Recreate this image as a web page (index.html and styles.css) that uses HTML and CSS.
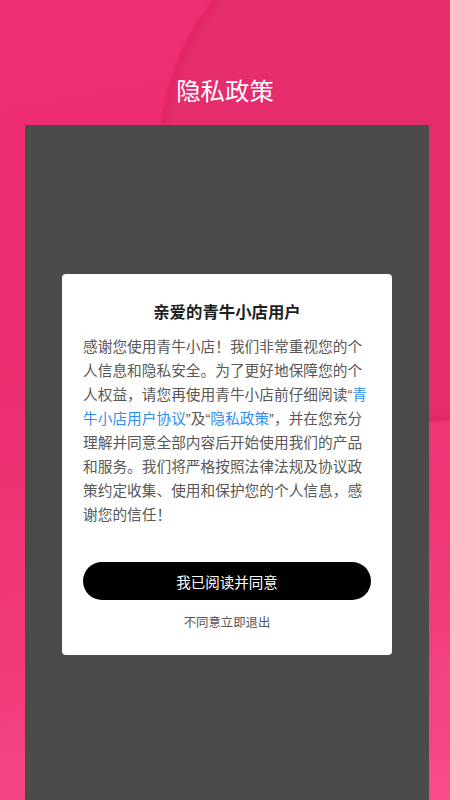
FILE: index.html
```html
<!DOCTYPE html>
<html lang="zh-CN">
<head>
<meta charset="utf-8">
<title>隐私政策</title>
<link rel="stylesheet" href="styles.css">
</head>
<body>
<div class="page">
  <header class="header">
    <h1 class="title">隐私政策</h1>
  </header>
  <main class="panel">
    <section class="dialog">
      <h2 class="dialog-title">亲爱的青牛小店用户</h2>
      <p class="dialog-text">感谢您使用青牛小店！我们非常重视您的个人信息和隐私安全。为了更好地保障您的个人权益，请您再使用青牛小店前仔细阅读“<a class="link">青牛小店用户协议</a>”及“<a class="link">隐私政策</a>”，并在您充分理解并同意全部内容后开始使用我们的产品和服务。我们将严格按照法律法规及协议政策约定收集、使用和保护您的个人信息，感谢您的信任！</p>
      <button class="btn-agree">我已阅读并同意</button>
      <div class="btn-exit">不同意立即退出</div>
    </section>
  </main>
</div>
</body>
</html>
```
FILE: styles.css
```css
html, body {
  margin: 0;
  padding: 0;
  height: 800px;
  overflow: hidden;
}
body {
  font-family: "Liberation Sans", "Noto Sans CJK SC", sans-serif;
  background:
    radial-gradient(circle 264px at 420px 160px, #e52c6d 0, #e52d6e 95%, rgba(218,34,98,0.7) 98.5%, rgba(218,34,98,0) 100%),
    radial-gradient(ellipse 300px 200px at 440px 260px, rgba(250,90,140,0.2), rgba(250,90,140,0) 100%),
    linear-gradient(170deg, #f02e74 0%, #ec2d71 40%, #f03a7a 75%, #fa4b8b 100%);
}
.page {
  display: flex;
  flex-direction: column;
  height: 800px;
}
.header {
  height: 125px;
  display: flex;
  justify-content: center;
}
.title {
  margin: 73px 0 0;
  font-size: 24.4px;
  line-height: 34px;
  font-weight: 400;
  color: #ffffff;
  font-family: "Noto Sans CJK SC", sans-serif;
}
.panel {
  flex: 1;
  margin: 0 21px 0 25px;
  background: #4b4b4b;
  padding-top: 149px;
  display: flex;
  justify-content: center;
  align-items: flex-start;
}
.dialog {
  width: 330px;
  box-sizing: border-box;
  background: #ffffff;
  border-radius: 4px;
  padding: 26px 21px 22px;
  display: flex;
  flex-direction: column;
}
.dialog-title {
  margin: 0 0 11px;
  font-size: 16.4px;
  line-height: 24px;
  font-weight: 700;
  color: #1e1e1e;
  text-align: center;
}
.dialog-text {
  margin: 0;
  font-size: 14.7px;
  line-height: 24px;
  color: #585858;
}
.link {
  color: #2f8ef2;
}
.btn-agree {
  margin-top: 35px;
  height: 38px;
  border: none;
  border-radius: 19px;
  background: #000000;
  color: #ffffff;
  font-family: "Noto Sans CJK SC", sans-serif;
  font-size: 14.5px;
  padding: 0;
}
.btn-exit {
  margin-top: 13px;
  font-size: 12.4px;
  line-height: 20px;
  text-align: center;
  color: #555555;
}
```
